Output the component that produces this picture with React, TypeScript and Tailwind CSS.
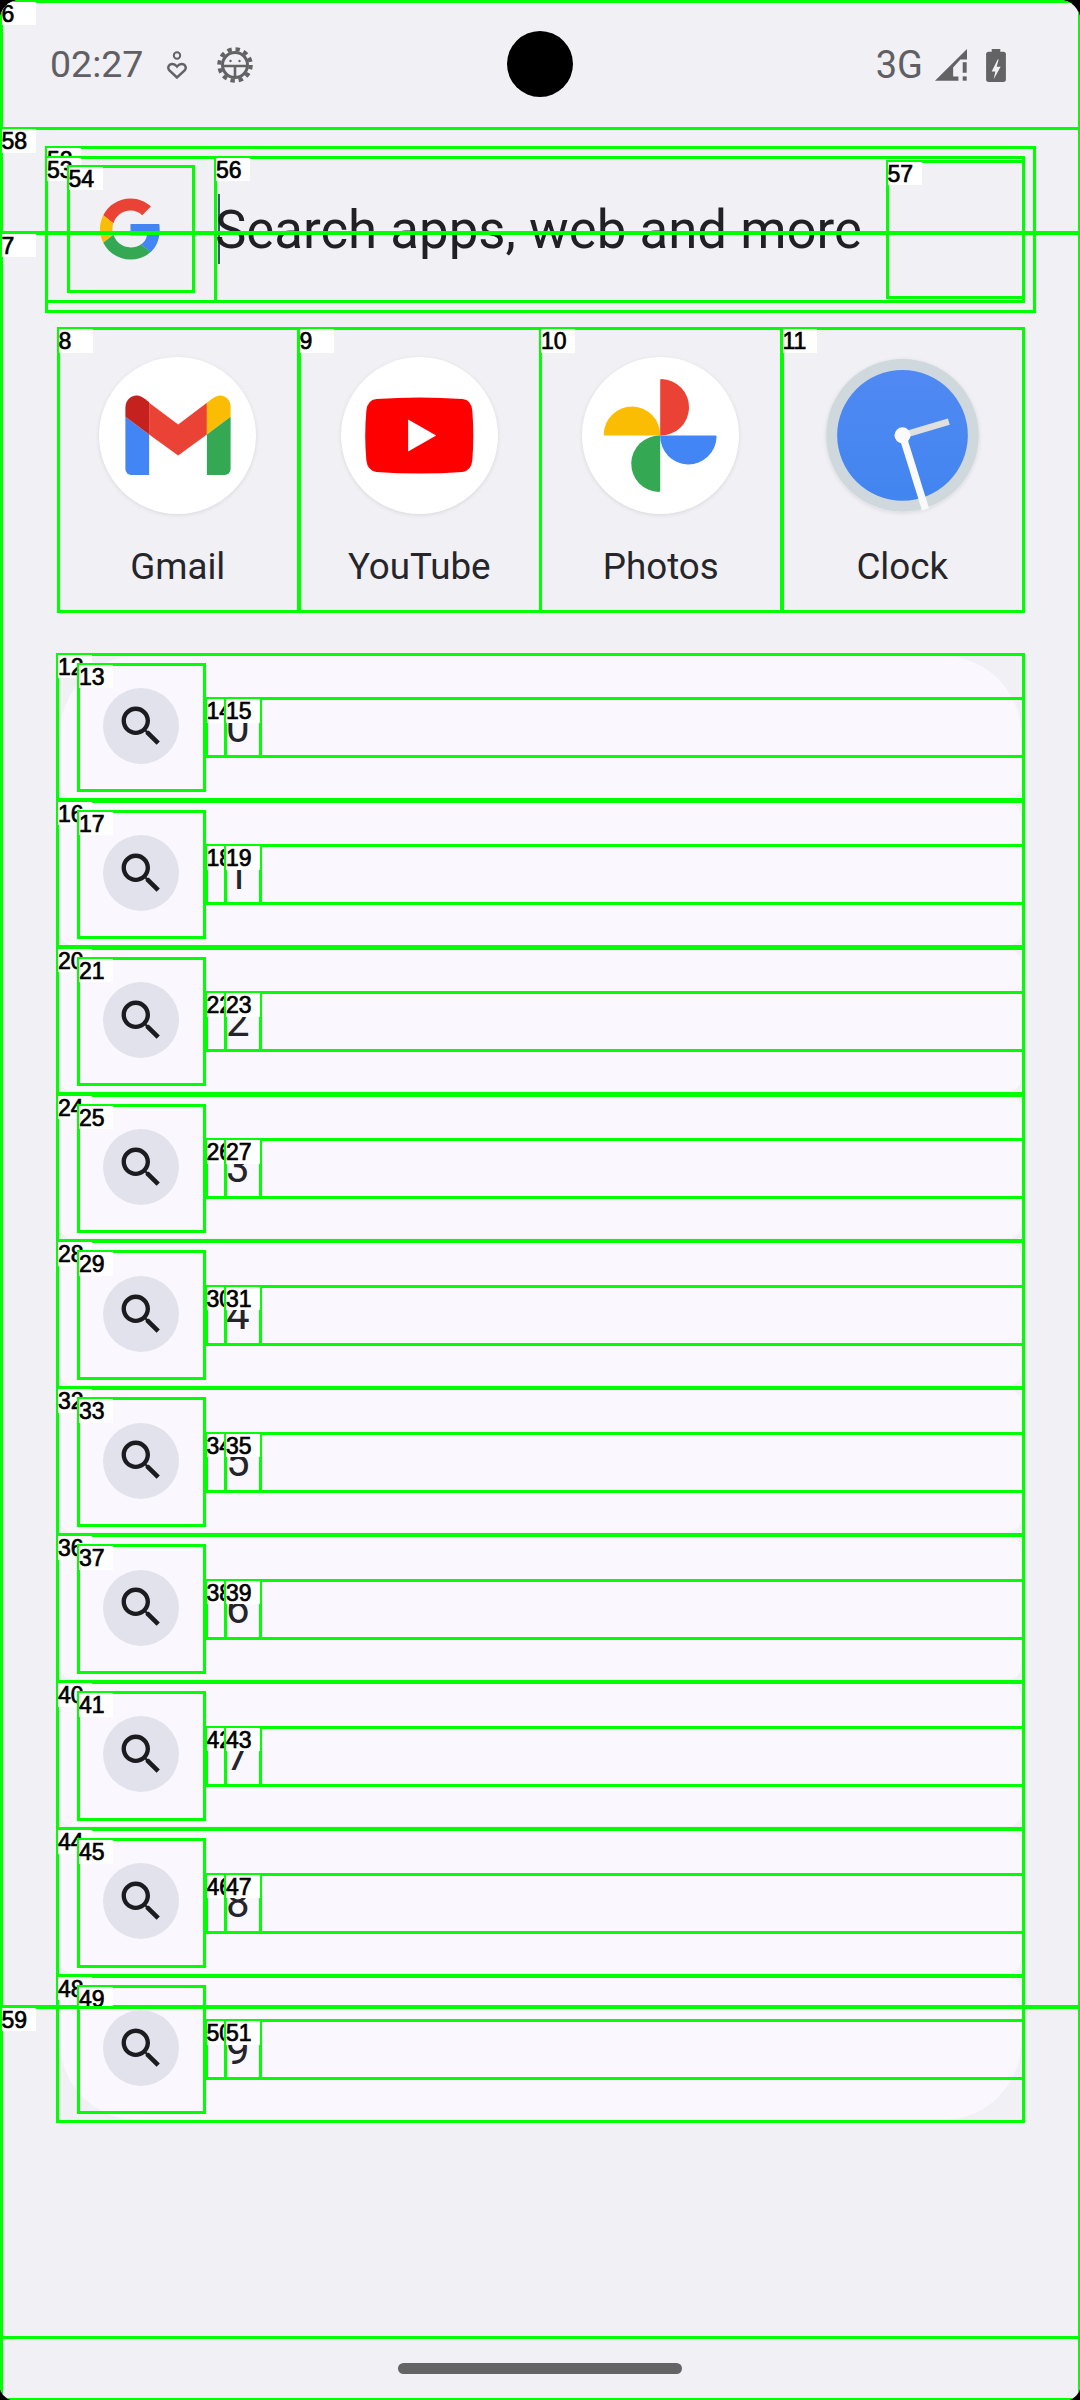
import React from 'react';

const suggestions = ['0', '1', '2', '3', '4', '5', '6', '7', '8', '9'];

// debug overlay boxes that sit on top of the launcher: [label, x, y, w, h]
type Box = [string, number, number, number, number];

const rowTop = (i: number) => 653.3 + 146.9 * i;

const overlayBoxes: Box[] = [
  ['', 0, -1, 1080, 2401],
  ['6', 0, 0, 1080, 129],
  ['7', 0, 232, 1080, 1775],
  ['8', 57, 327.5, 242, 285],
  ['9', 298, 327.5, 243, 285],
  ['10', 539.5, 327.5, 242.5, 285],
  ['11', 781, 327.5, 243.5, 285],
  ...suggestions.flatMap((_, i): Box[] => {
    const n = 12 + i * 4;
    const y = rowTop(i);
    return [
      [String(n), 56.5, y, 968, 147.5],
      [String(n + 1), 77.5, y + 10, 128, 128.5],
      [String(n + 2), 205, y + 44.5, 819.5, 60],
      [String(n + 3), 224.5, y + 44.5, 36.5, 60],
    ];
  }),
  ['52', 45.5, 146, 989.5, 166],
  ['53', 45.5, 156, 979, 146.5],
  ['54', 67, 165, 127.5, 127.5],
  ['56', 214.5, 156, 810, 146.5],
  ['57', 886, 160, 138.5, 138.5],
  ['58', 0, 127.5, 1080, 105.5],
  ['59', 0, 2006, 1080, 332],
];

const SearchIcon = () => (
  <svg viewBox="0 0 24 24" className="w-[52.5px] h-[52.5px]" fill="#1c1c20">
    <path d="M15.5 14h-.79l-.28-.27C15.41 12.59 16 11.11 16 9.5 16 5.91 13.09 3 9.5 3S3 5.91 3 9.5 5.91 16 9.5 16c1.61 0 3.09-.59 4.23-1.57l.27.28v.79l5 4.99L20.49 19l-4.99-5zm-6 0C7.01 14 5 11.99 5 9.5S7.01 5 9.5 5 14 7.01 14 9.5 11.99 14 9.5 14z" />
  </svg>
);

const GoogleG = () => (
  <svg viewBox="0 0 48 48" className="w-[61px] h-[62px]">
    <path fill="#EA4335" d="M24 9.5c3.54 0 6.71 1.22 9.21 3.6l6.85-6.85C35.9 2.38 30.47 0 24 0 14.62 0 6.51 5.38 2.56 13.22l7.98 6.19C12.43 13.72 17.74 9.5 24 9.5z" />
    <path fill="#4285F4" d="M46.98 24.55c0-1.57-.15-3.09-.38-4.55H24v9.02h12.94c-.58 2.96-2.26 5.48-4.78 7.18l7.73 6c4.51-4.18 7.09-10.36 7.09-17.65z" />
    <path fill="#FBBC05" d="M10.53 28.59c-.48-1.45-.76-2.99-.76-4.59s.27-3.14.76-4.59l-7.98-6.19C.92 16.46 0 20.12 0 24c0 3.88.92 7.54 2.56 10.78l7.97-6.19z" />
    <path fill="#34A853" d="M24 48c6.48 0 11.93-2.13 15.89-5.81l-7.73-6c-2.15 1.45-4.92 2.3-8.16 2.3-6.26 0-11.57-4.22-13.47-9.91l-7.98 6.19C6.51 42.62 14.62 48 24 48z" />
  </svg>
);

const GmailIcon = () => (
  <svg viewBox="178 110 470 470" className="w-full h-full">
    <path fill="#4285F4" d="M257 289 L328 342 V463 H275 A18 18 0 0 1 257 445 Z" />
    <path fill="#C5221F" d="M257 289 V262 C257 240 272 225 290 225 C303 225 312 232 328 245 V342 Z" />
    <path fill="#EA4335" d="M328 247 L415 312 L501 247 V342 L415 405 L328 342 Z" />
    <path fill="#FBBC04" d="M501 247 L518 234 C528 227 535 225 541 225 C558 225 572 240 572 258 V289 L501 342 Z" />
    <path fill="#34A853" d="M501 342 L572 289 V445 A18 18 0 0 1 554 463 H501 Z" />
  </svg>
);

const YouTubeIcon = () => (
  <svg viewBox="900 110 470 470" className="w-full h-full">
    <path fill="#FF0000" d="M1006 236 Q1135 227 1264 236 Q1290 239 1293 270 Q1299 345 1293 420 Q1290 450 1264 454 Q1135 463 1006 454 Q979 450 976 420 Q969 345 976 270 Q979 239 1006 236 Z" />
    <path fill="#FFFFFF" d="M1101 297 L1185 345 L1101 393 Z" />
  </svg>
);

const PhotosIcon = () => (
  <svg viewBox="156 110 470 470" className="w-full h-full">
    <path fill="#EA4335" d="M390 180 Q390 176 394 176 A84.5 84.5 0 0 1 390 345 Z" />
    <path fill="#FBBC04" d="M225 345 Q221 345 221 341 A84.5 84.5 0 0 1 390 345 Z" />
    <path fill="#34A853" d="M390 510 Q390 514 386 514 A84.5 84.5 0 0 1 390 345 Z" />
    <path fill="#4285F4" d="M555 345 Q559 345 559 349 A84.5 84.5 0 0 1 390 345 Z" />
  </svg>
);

const ClockIcon = () => (
  <svg viewBox="885 117 458 459" className="w-full h-full">
    <defs>
      <linearGradient id="clockFace" x1="0" y1="0" x2="0" y2="1">
        <stop offset="0" stopColor="#5089F2" />
        <stop offset="1" stopColor="#4285F0" />
      </linearGradient>
    </defs>
    <circle cx="1114" cy="346" r="229" fill="#CFD8DC" />
    <circle cx="1114" cy="346" r="196" fill="url(#clockFace)" />
    <path d="M1114 346 L1253 305" stroke="#E0E0E0" strokeWidth="20" />
    <path d="M1114 346 L1183 568" stroke="#FAFAFA" strokeWidth="22" />
    <circle cx="1114" cy="346" r="24" fill="#FAFAFA" />
  </svg>
);

const apps = [
  { name: 'Gmail', icon: <GmailIcon />, tile: true },
  { name: 'YouTube', icon: <YouTubeIcon />, tile: true },
  { name: 'Photos', icon: <PhotosIcon />, tile: true },
  { name: 'Clock', icon: <ClockIcon />, tile: false },
];

const StatusBar = () => (
  <div className="h-[128px] flex items-center pt-[2px] pl-[50px] pr-[74px] text-[#606064]">
    <span className="text-[37.5px] leading-none">02:27</span>
    <svg viewBox="0 0 20 28" className="w-[20px] h-[28px] ml-[24px]" fill="none" stroke="#636366">
      <circle cx="10" cy="4.5" r="3.2" strokeWidth="2" />
      <path strokeWidth="2.4" d="M10 26.5 L2.4 19.5 Q0 16.5 2.6 13.8 Q6.6 11.5 10 15.6 Q13.4 11.5 17.4 13.8 Q20 16.5 17.6 19.5 Z" />
    </svg>
    <svg viewBox="0 0 36 36" className="w-[36px] h-[36px] ml-[30px]" fill="none" stroke="#636366">
      <circle cx="18" cy="18" r="12.5" strokeWidth="3" />
      <circle cx="18" cy="18" r="15.8" strokeWidth="4" strokeDasharray="4.4 3.88" />
      <path strokeWidth="2.6" d="M6 19 H30 M18 19 V30" />
      <circle cx="13.5" cy="14" r="1.2" fill="#636366" strokeWidth="0" />
      <circle cx="22.5" cy="14" r="1.2" fill="#636366" strokeWidth="0" />
    </svg>
    <span className="ml-auto text-[38px] leading-none">3G</span>
    <svg viewBox="285 52 97 97" className="w-[32px] h-[32px] ml-[12px]" fill="#636366">
      <path d="M382 52 V84 H362 L340 108 V135 H356 V148 H285 Z" />
      <rect x="369" y="92" width="12" height="32" />
      <rect x="369" y="135" width="12" height="13" />
    </svg>
    <svg viewBox="438 50 60 100" className="w-[20px] h-[33px] ml-[19px]" fill="#636366">
      <rect x="455" y="50" width="26" height="14" />
      <rect x="438" y="58" width="60" height="92" rx="8" />
      <path fill="#F1F0F5" d="M473 82 L455 118 H466 L461 142 L482 104 H470 L476 82 Z" />
    </svg>
  </div>
);

const SearchBar = () => (
  <div className="mt-[28px] ml-[46px] mr-[56px] h-[146px] flex items-center">
    <div className="w-[169px] flex justify-center pr-[1px]">
      <GoogleG />
    </div>
    <div className="w-[2px] h-[70px] ml-[2.5px] -mr-[4.5px] bg-[#45536e]" />
    <span className="text-[52.8px] leading-none text-[#212125] mt-[2px] whitespace-nowrap">
      Search apps, web and more
    </span>
  </div>
);

const AppGrid = () => (
  <div className="mt-[26px] mx-[57px] grid grid-cols-4 h-[284px]">
    {apps.map((app) => (
      <div key={app.name} className="flex flex-col items-center pt-[29px]">
        {app.tile ? (
          <div className="w-[157px] h-[157px] rounded-full bg-white shadow-[0_1px_4px_rgba(0,0,0,0.1)]">
            {app.icon}
          </div>
        ) : (
          <div className="w-[153px] h-[153px] my-[2px] rounded-full shadow-[0_1px_4px_rgba(0,0,0,0.1)]">
            {app.icon}
          </div>
        )}
        <span className="mt-[31px] text-[36.75px] leading-[44px] text-[#26262a]">{app.name}</span>
      </div>
    ))}
  </div>
);

const SuggestionList = () => (
  <div className="mt-[41.3px] ml-[57px] w-[967px] flex flex-col">
    {suggestions.map((digit, i) => {
      const shape =
        i === 0
          ? 'rounded-t-[78px] rounded-b-[12px]'
          : i === suggestions.length - 1
            ? 'rounded-t-[12px] rounded-b-[78px]'
            : 'rounded-[12px]';
      return (
        <div key={digit} className="h-[146.9px] py-[2.5px] px-[3px]">
          <div className={`h-full flex items-center pl-[43px] bg-[#FAF8FE] ${shape}`}>
            <div className="w-[76px] h-[76px] rounded-full bg-[#E1E2EC] flex items-center justify-center -mt-[1px]">
              <SearchIcon />
            </div>
            <span className="ml-[47px] text-[42px] leading-[58px] text-[#24242a] mt-[2px]">{digit}</span>
          </div>
        </div>
      );
    })}
  </div>
);

const Overlay = () => (
  <div className="absolute inset-0 pointer-events-none">
    {overlayBoxes.map(([label, x, y, w, h], i) => (
      <div
        key={i}
        className="absolute border-[3px] border-[#00ff00]"
        style={{ left: x - 0.5, top: y - 0.5, width: w + 1, height: h + 1 }}
      >
        {label && (
          <span className="absolute -left-[1px] -top-[1px] w-[34px] h-[23.5px] overflow-hidden bg-white text-black text-[23px] leading-[24px] font-['Liberation_Sans',sans-serif] [-webkit-text-stroke:0.7px_black]">
            {label}
          </span>
        )}
      </div>
    ))}
  </div>
);

export default function App() {
  return (
    <div className="w-[1080px] h-[2400px] bg-black overflow-hidden font-['Roboto',sans-serif]">
      <div className="relative w-full h-full bg-[#F1F0F5] overflow-hidden rounded-t-[20px] rounded-b-[14px]">
        <StatusBar />
        <SearchBar />
        <AppGrid />
        <SuggestionList />

        {/* front camera cut-out */}
        <div className="absolute left-[507px] top-[31px] w-[66px] h-[66px] rounded-full bg-black" />
        {/* gesture pill */}
        <div className="absolute left-[398px] top-[2363px] w-[284px] h-[11px] rounded-full bg-[#646466]" />

        <Overlay />
      </div>
    </div>
  );
}
